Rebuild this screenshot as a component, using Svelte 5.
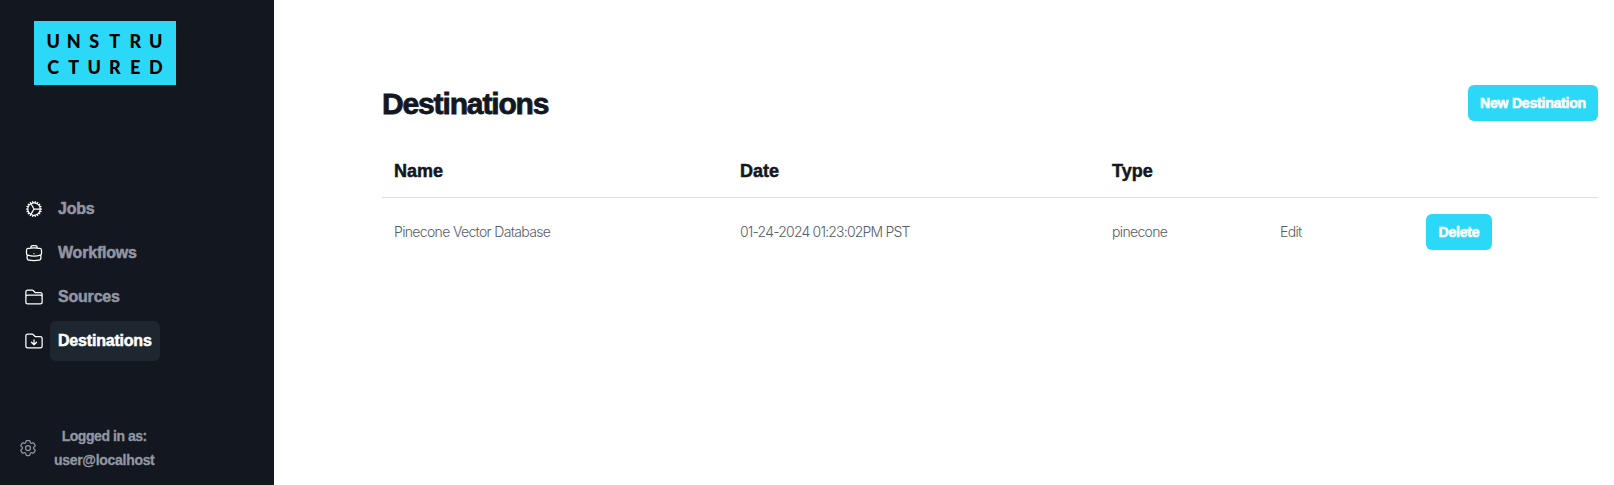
<script>
  const logoLetters = [...'UNSTRUCTURED'];
  const navItems = [
    { label: 'Jobs', icon: 'M4.5 12a7.5 7.5 0 0015 0m-15 0a7.5 7.5 0 1115 0m-15 0H3m16.5 0H21m-1.5 0H12m-8.457 3.077l1.41-.513m14.095-5.13l1.41-.513M5.106 17.785l1.15-.964m11.49-9.642l1.149-.964M7.501 19.795l.75-1.3m7.5-12.99l.75-1.3m-6.063 16.658l.26-1.477m2.605-14.772l.26-1.477m0 17.726l-.26-1.477M10.698 4.614l-.26-1.477M16.5 19.794l-.75-1.299M7.5 4.205L12 12m6.894 5.785l-1.149-.964M6.256 7.178l-1.15-.964m15.352 8.864l-1.41-.513M4.954 9.435l-1.41-.514M12.002 12l-3.75 6.495' },
    { label: 'Workflows', icon: 'M20.25 14.15v4.25c0 1.094-.787 2.036-1.872 2.18-2.087.277-4.216.42-6.378.42s-4.291-.143-6.378-.42c-1.085-.144-1.872-1.086-1.872-2.18v-4.25m16.5 0a2.18 2.18 0 00.75-1.661V8.706c0-1.081-.768-2.015-1.837-2.175a48.114 48.114 0 00-3.413-.387m4.5 8.006c-.194.165-.42.295-.673.38A23.978 23.978 0 0112 15.75c-2.648 0-5.195-.429-7.577-1.22a2.016 2.016 0 01-.673-.38m0 0A2.18 2.18 0 013 12.489V8.706c0-1.081.768-2.015 1.837-2.175a48.111 48.111 0 013.413-.387m7.5 0V5.25A2.25 2.25 0 0013.5 3h-3a2.25 2.25 0 00-2.25 2.25v.894m7.5 0a48.667 48.667 0 00-7.5 0M12 12.75h.008v.008H12v-.008z' },
    { label: 'Sources', icon: 'M2.25 12.75V12A2.25 2.25 0 014.5 9.75h15A2.25 2.25 0 0121.75 12v.75m-8.69-6.44l-2.12-2.12a1.5 1.5 0 00-1.061-.44H4.5A2.25 2.25 0 002.25 6v12a2.25 2.25 0 002.25 2.25h15A2.25 2.25 0 0021.75 18V9a2.25 2.25 0 00-2.25-2.25h-5.379a1.5 1.5 0 01-1.06-.44z' },
    { label: 'Destinations', active: true, icon: 'M9 13.5l3 3m0 0l3-3m-3 3v-6m1.06-4.19l-2.12-2.12a1.5 1.5 0 00-1.061-.44H4.5A2.25 2.25 0 002.25 6v12a2.25 2.25 0 002.25 2.25h15A2.25 2.25 0 0021.75 18V9a2.25 2.25 0 00-2.25-2.25h-5.379a1.5 1.5 0 01-1.06-.44z' }
  ];
  const gear = 'M9.594 3.94c.09-.542.56-.94 1.11-.94h2.593c.55 0 1.02.398 1.11.94l.213 1.281c.063.374.313.686.645.87.074.04.147.083.22.127.324.196.72.257 1.075.124l1.217-.456a1.125 1.125 0 011.37.49l1.296 2.247a1.125 1.125 0 01-.26 1.431l-1.003.827c-.293.24-.438.613-.431.992a6.759 6.759 0 010 .255c-.007.378.138.75.43.99l1.005.828c.424.35.534.954.26 1.43l-1.298 2.247a1.125 1.125 0 01-1.369.491l-1.217-.456c-.355-.133-.75-.072-1.076.124a6.57 6.57 0 01-.22.128c-.331.183-.581.495-.644.869l-.213 1.28c-.09.543-.56.941-1.11.941h-2.594c-.55 0-1.02-.398-1.11-.94l-.213-1.281c-.062-.374-.312-.686-.644-.87a6.52 6.52 0 01-.22-.127c-.325-.196-.72-.257-1.076-.124l-1.217.456a1.125 1.125 0 01-1.369-.49l-1.297-2.247a1.125 1.125 0 01.26-1.431l1.004-.827c.292-.24.437-.613.43-.992a6.932 6.932 0 010-.255c.007-.378-.138-.75-.43-.99l-1.004-.828a1.125 1.125 0 01-.26-1.43l1.297-2.247a1.125 1.125 0 011.37-.491l1.216.456c.356.133.751.072 1.076-.124.072-.044.146-.087.22-.128.332-.183.582-.495.644-.869l.214-1.281zM15 12a3 3 0 11-6 0 3 3 0 016 0z';
  const rows = [{ name: 'Pinecone Vector Database', date: '01-24-2024 01:23:02PM PST', type: 'pinecone' }];
</script>

{#snippet icon(path)}
  <svg viewBox="0 0 24 24" width="20" height="20" fill="none" stroke="currentColor" stroke-width="1.5" stroke-linecap="round" stroke-linejoin="round" aria-hidden="true"><path d={path} /></svg>
{/snippet}

<div class="app">
  <aside>
    <div class="logo">
      {#each logoLetters as letter}<span>{letter}</span>{/each}
    </div>
    <nav>
      {#each navItems as item}
        <div class="nav-row">
          {@render icon(item.icon)}
          <a href="#top" class:active={item.active}>{item.label}</a>
        </div>
      {/each}
    </nav>
    <div class="account">
      {@render icon(gear)}
      <p><span class="caption">Logged in as:</span><span>user@localhost</span></p>
    </div>
  </aside>
  <main>
    <header>
      <h1>Destinations</h1>
      <button class="new">New Destination</button>
    </header>
    <div class="grid head">
      <div>Name</div><div>Date</div><div>Type</div><div></div><div></div>
    </div>
    {#each rows as row}
      <div class="grid row">
        <div class="text">{row.name}</div>
        <div class="text date">{row.date}</div>
        <div class="text">{row.type}</div>
        <div class="text">Edit</div>
        <div><button>Delete</button></div>
      </div>
    {/each}
  </main>
</div>

<style>
  :global(body) { margin: 0; background: #fff; }
  .app {
    display: flex;
    height: 485px;
    overflow: hidden;
    font-family: "Liberation Sans", Arial, sans-serif;
    color: #131722;
  }
  aside {
    display: flex;
    flex-direction: column;
    box-sizing: border-box;
    width: 274px;
    flex: none;
    padding-top: 21px;
    background: #131720;
    color: #9296a2;
  }
  .logo {
    display: grid;
    grid-template-columns: repeat(6, 20.5px);
    grid-template-rows: 26.5px 26.5px;
    box-sizing: border-box;
    width: 141.6px;
    height: 64px;
    margin-left: 34px;
    padding: 6.5px 0 0 9px;
    background: #2cd8f7;
    color: #000;
    font: 900 18px/26.5px Lato, sans-serif;
    text-align: center;
  }
  nav {
    display: flex;
    flex-direction: column;
    gap: 4px;
    margin: 104px 0 0 24px;
  }
  .nav-row { display: flex; align-items: center; gap: 6px; color: #fff; }
  svg { flex: none; display: block; }
  a {
    padding: 0 8px;
    border-radius: 6px;
    color: #9296a2;
    font-size: 16px;
    font-weight: 700;
    line-height: 40px;
    letter-spacing: -0.2px;
    text-decoration: none;
    -webkit-text-stroke: 0.5px currentColor;
  }
  a.active { background: #1e2730; color: #fff; }
  .account {
    display: flex;
    align-items: center;
    gap: 16px;
    margin: 63px 0 0 18px;
  }
  .account p {
    display: flex;
    flex-direction: column;
    align-items: center;
    margin: 0;
    font-size: 14px;
    font-weight: 700;
    line-height: 24px;
    letter-spacing: -0.3px;
    -webkit-text-stroke: 0.3px currentColor;
  }
  .account .caption { letter-spacing: -0.45px; }
  main {
    flex: 1;
    padding: 85px 16px 0 108px;
  }
  header {
    display: flex;
    align-items: center;
    justify-content: space-between;
    height: 36px;
  }
  h1 {
    margin: 0;
    padding-top: 1px;
    font-size: 30px;
    line-height: 36px;
    letter-spacing: -1.14px;
    -webkit-text-stroke: 0.8px currentColor;
  }
  button {
    display: block;
    height: 36px;
    padding: 0 12px;
    border: 0;
    border-radius: 6px;
    background: #2cd8f7;
    color: #fff;
    font: 700 14px/36px "Liberation Sans", Arial, sans-serif;
    letter-spacing: -0.2px;
    white-space: nowrap;
    -webkit-text-stroke: 0.6px currentColor;
  }
  .new { width: 130px; }
  .grid {
    display: grid;
    grid-template-columns: 346px 372px 168px 146px 1fr;
    align-items: center;
  }
  .grid > div { padding: 0 12px; }
  .head {
    height: 52px;
    margin-top: 24px;
    border-bottom: 1px solid #dedfe2;
    font-size: 18px;
    font-weight: 700;
    line-height: 28px;
    -webkit-text-stroke: 0.5px currentColor;
  }
  .row {
    height: 68px;
    color: #565c6b;
    font-family: Inter, sans-serif;
    font-size: 14px;
    font-weight: 300;
    letter-spacing: -0.66px;
  }
  .grid > .text { padding-bottom: 2px; }
  .date { letter-spacing: -0.8px; }
  .row button { width: 66px; }
</style>
